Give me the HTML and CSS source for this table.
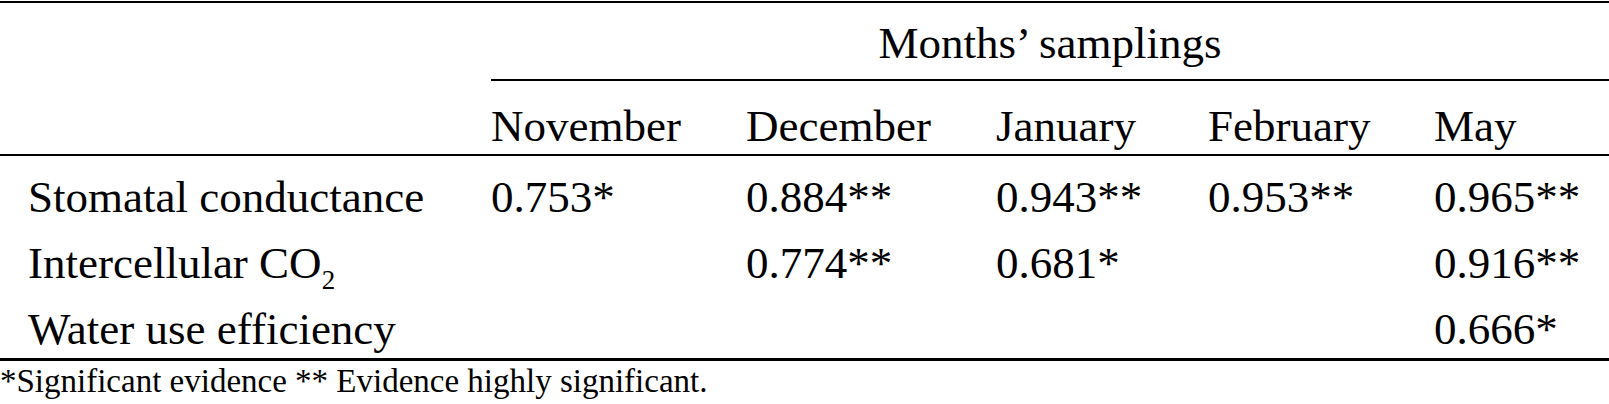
FILE: index.html
```html
<!DOCTYPE html>
<html lang="en">
<head>
<meta charset="utf-8">
<title>Correlations by month</title>
<link rel="stylesheet" href="styles.css">
</head>
<body>
<table class="corr">
  <colgroup>
    <col class="c-label">
    <col class="c-nov">
    <col class="c-dec">
    <col class="c-jan">
    <col class="c-feb">
    <col class="c-may">
  </colgroup>
  <thead>
    <tr class="group-row">
      <th class="blank"></th>
      <th class="group" colspan="5">Months’ samplings</th>
    </tr>
    <tr class="month-row">
      <th class="blank"></th>
      <th>November</th>
      <th>December</th>
      <th>January</th>
      <th>February</th>
      <th>May</th>
    </tr>
  </thead>
  <tbody>
    <tr>
      <td class="label">Stomatal conductance</td>
      <td>0.753*</td>
      <td>0.884**</td>
      <td>0.943**</td>
      <td>0.953**</td>
      <td>0.965**</td>
    </tr>
    <tr>
      <td class="label">Intercellular CO<sub>2</sub></td>
      <td></td>
      <td>0.774**</td>
      <td>0.681*</td>
      <td></td>
      <td>0.916**</td>
    </tr>
    <tr class="last">
      <td class="label">Water use efficiency</td>
      <td></td>
      <td></td>
      <td></td>
      <td></td>
      <td>0.666*</td>
    </tr>
  </tbody>
</table>
<p class="note">*Significant evidence ** Evidence highly significant.</p>
</body>
</html>
```

FILE: styles.css
```css
html, body {
  margin: 0;
  padding: 0;
  background: #fff;
}

body {
  font-family: "Liberation Serif", "Times New Roman", serif;
  color: #000;
  width: 1609px;
}

.corr {
  margin-top: 1px;
  width: 1609px;
  table-layout: fixed;
  border-collapse: separate;
  border-spacing: 0;
  font-size: 45px;
  line-height: 50px;
}

.c-label { width: 491px; }
.c-nov { width: 255px; }
.c-dec { width: 250px; }
.c-jan { width: 212px; }
.c-feb { width: 226px; }
.c-may { width: 175px; }

.corr th,
.corr td {
  padding: 0;
  text-align: left;
  font-weight: normal;
  white-space: nowrap;
  vertical-align: top;
}

.group-row th {
  border-top: 2px solid #000;
}

.group-row .group {
  text-align: center;
  padding: 15px 0 11px 0;
  border-bottom: 2px solid #000;
}

.month-row th {
  padding: 20px 0 3px 0;
  border-bottom: 2px solid #000;
}

.corr tbody td {
  padding-top: 16px;
}

.corr td.label {
  padding-left: 28px;
}

.corr tbody tr.last td {
  padding-bottom: 4px;
  border-bottom: 3px solid #000;
}

.corr sub {
  font-size: 27px;
  line-height: 0;
  vertical-align: -11px;
}

.note {
  margin: 0;
  padding-top: 1px;
  font-size: 33px;
  line-height: 38px;
}
```
